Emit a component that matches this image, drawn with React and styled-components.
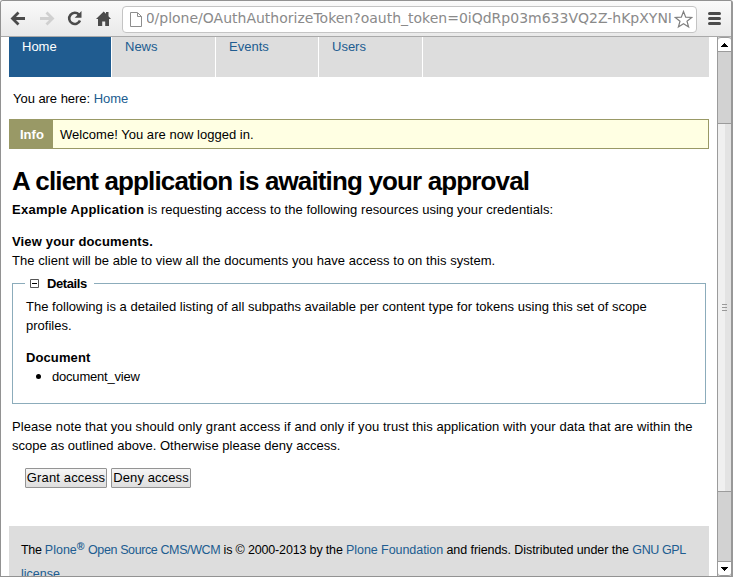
import React from "react";
import styled, { createGlobalStyle } from "styled-components";

const Global = createGlobalStyle`
  * { box-sizing: border-box; }
  html, body { margin: 0; padding: 0; overflow: hidden; }
  body { background: #fff; font-family: "Liberation Sans", Arial, sans-serif; font-size: 13px; color: #000; }
`;

const Window = styled.div`
  width: 733px;
  height: 577px;
  display: flex;
  flex-direction: column;
  border: 1px solid #929292;
  border-right: 2px solid #989898;
  border-radius: 3px 3px 0 0;
  overflow: hidden;
  background: #fff;
`;

const Toolbar = styled.header`
  flex: none;
  height: 36px;
  display: flex;
  align-items: center;
  border-bottom: 1px solid #a9a9a9;
  background: linear-gradient(#fafafa, #e9e9e9);
`;

const NavIcons = styled.svg`
  flex: none;
  width: 121px;
  height: 35px;
`;

const AddressBar = styled.div`
  width: 575px;
  height: 27px;
  margin-top: 1px;
  display: flex;
  align-items: center;
  border: 1px solid #c4c4c4;
  border-radius: 4px;
  background: #fff;
`;

const PageIcon = styled.svg`
  flex: none;
  width: 24px;
  height: 25px;
`;

const UrlClip = styled.div`
  flex: none;
  width: 526px;
  height: 23px;
  overflow: hidden;
  display: flex;
  justify-content: flex-end;
  padding-right: 1px;
`;

const Url = styled.span`
  flex: none;
  font: 14px/20px "DejaVu Sans", sans-serif;
  letter-spacing: ${(p) => p.$ls}px;
  color: #8a8a8a;
  white-space: nowrap;
`;

const Viewport = styled.div`
  flex: 1;
  min-height: 0;
  display: flex;
`;

const Page = styled.div`
  flex: 1;
  min-width: 0;
  padding: 0 8px;
  overflow: hidden;
`;

const Nav = styled.nav`
  height: 40px;
  display: flex;
  background: #ddd;
`;

const Tab = styled.a`
  width: ${(p) => p.$w}px;
  padding-left: 13px;
  border-right: 1px solid #fff;
  line-height: 20px;
  background: ${(p) => (p.$active ? "#205c90" : "#ddd")};
  color: ${(p) => (p.$active ? "#fff" : "#205c90")};
`;

const Line = styled.div`
  height: 19px;
  line-height: 19px;
  white-space: nowrap;
  letter-spacing: ${(p) => p.$ls || 0}px;
  font-weight: ${(p) => (p.$bold ? 700 : 400)};
`;

const Link = styled.a`
  color: #205c90;
`;

const Run = styled.span`
  letter-spacing: ${(p) => p.$ls}px;
  font-weight: ${(p) => (p.$bold ? 700 : 400)};
`;

const Breadcrumbs = styled.div`
  padding: 12px 0 11px 4px;
`;

const Message = styled.div`
  height: 30px;
  display: flex;
  border: 1px solid #996;
  background: #ffffe3;
  line-height: 29px;
`;

const MessageLabel = styled.strong`
  width: 43px;
  padding-left: 10px;
  margin-right: 7px;
  background: #996;
  color: #fff;
`;

const Content = styled.main`
  padding: 15px 3px 0;
`;

const Title = styled.h1`
  margin: 0;
  height: 36px;
  font-size: 26px;
  line-height: 35px;
  letter-spacing: ${(p) => p.$ls}px;
  white-space: nowrap;
`;

const Section = styled.section`
  margin-top: 13px;
`;

const Details = styled.fieldset`
  margin: 4px 0 0;
  height: 130px;
  min-width: 0;
  padding: 4px 0 0 13px;
  border: 1px solid #8cacbb;
`;

const Legend = styled.legend`
  display: flex;
  align-items: center;
  height: 19px;
  margin-left: -1px;
  padding: 0 7px 0 5px;
  font-weight: 700;
  letter-spacing: -0.4px;
`;

const Collapse = styled.svg`
  width: 9px;
  height: 9px;
  margin-right: 8px;
`;

const Bullet = styled.span`
  display: inline-block;
  width: 5px;
  height: 5px;
  margin: 0 11px 2px 10px;
  border-radius: 50%;
  background: #000;
`;

const Actions = styled.div`
  display: flex;
  gap: 4px;
  padding: 13px 0 0 13px;
`;

const Button = styled.button`
  width: ${(p) => p.$w}px;
  height: 20px;
  padding: 0;
  border: 1px solid #949494;
  border-radius: 1px;
  background: linear-gradient(#f6f6f6, #dedede);
  color: #000;
  font: 13px/18px "Liberation Sans", Arial, sans-serif;
  letter-spacing: ${(p) => p.$ls}px;
  white-space: nowrap;
`;

const Footer = styled.footer`
  height: 60px;
  margin-top: 38px;
  padding: 12px;
  background: #ddd;
  font-size: 12.5px;
  line-height: 24px;
  white-space: nowrap;
`;

const FooterLine = styled.div`
  height: 24px;
`;

const Registered = styled.sup`
  font-size: 10.5px;
  font-weight: 700;
  line-height: 0;
  vertical-align: 4px;
`;

const Scrollbar = styled.div`
  flex: none;
  width: 14px;
  display: flex;
  flex-direction: column;
  border-left: 1px solid #9b9b9b;
  background: #d2d2d2;
`;

const ScrollButton = styled.svg`
  flex: none;
  width: 13px;
  height: 15px;
  background: #fff;
  border-radius: ${(p) => (p.$down ? "0 0 3px 3px" : "3px 3px 0 0")};
  border-top: 1px solid #9b9b9b;
  border-bottom: 1px solid #9b9b9b;
`;

const Track = styled.div`
  flex: 1;
  padding-top: 71px;
`;

const Thumb = styled.div`
  height: 369px;
  border-top: 1px solid #9b9b9b;
  border-bottom: 1px solid #9b9b9b;
  background: linear-gradient(90deg, #f0f0f0 7px, #e3e3e3 7px);
  display: flex;
  flex-direction: column;
  align-items: center;
  justify-content: center;
  gap: 2px;
`;

const Grip = styled.i`
  width: 5px;
  height: 1px;
  background: #999;
`;

const tabs = [
  { name: "Home", w: 103, active: true },
  { name: "News", w: 104 },
  { name: "Events", w: 103 },
  { name: "Users", w: 104 },
];

export default function App() {
  return (
    <>
      <Global />
      <Window>
        <Toolbar>
          <NavIcons viewBox="1 1 121 35" fill="none">
            <path d="M25 18.500H13.500M18.500 12.500l-6 6 6 6" stroke="#4b4b4b" strokeWidth="2.800" />
            <path d="M40 18.500h11.500M46.500 12.500l6 6-6 6" stroke="#d0d0d0" strokeWidth="2.800" />
            <path d="M79 14.700A5.600 5.600 0 1 0 80 20.500" stroke="#4b4b4b" strokeWidth="2.600" />
            <path d="M81.500 11v6.800h-6.800z" fill="#4b4b4b" />
            <path d="M96 19l7.700-7.500 2.300 2.200V12h2.500v4.200l2.500 2.800h-2v7h-3.800v-4.500h-3V26H98v-7z" fill="#4b4b4b" />
          </NavIcons>
          <AddressBar>
            <PageIcon viewBox="0 0 24 25">
              <path d="M7.500 5.500h7l4 4v10h-11z" fill="#fff" stroke="#8d8d8d" />
              <path d="M14.500 6v3.500h4" fill="none" stroke="#8d8d8d" />
            </PageIcon>
            <UrlClip>
              <Url $ls={0}>0/plone/OAuthAuthorizeToken?oauth_token=0iQdRp03m633VQ2Z-hKpXYNI</Url>
            </UrlClip>
            <svg width="23" height="25" viewBox="673 6 23 25">
              <path d="M683.500 10.500l2.200 5.600 6 .3-4.700 3.800 1.600 5.800-5.100-3.300-5.100 3.300 1.600-5.800-4.700-3.800 6-.3z" fill="#fff" stroke="#808080" strokeWidth="1.200" />
            </svg>
          </AddressBar>
          <svg width="34" height="35" viewBox="697 1 34 35">
            <path d="M709.500 13.500h10M709.500 18.500h10M709.500 23.500h10" stroke="#4b4b4b" strokeWidth="3" strokeLinecap="round" />
          </svg>
        </Toolbar>
        <Viewport>
          <Page>
            <Nav>
              {tabs.map((t) => (
                <Tab key={t.name} $w={t.w} $active={t.active}>{t.name}</Tab>
              ))}
            </Nav>
            <Breadcrumbs>
              <Line $ls={-0.04}>You are here: <Link>Home</Link></Line>
            </Breadcrumbs>
            <Message>
              <MessageLabel>Info</MessageLabel>
              <Run $ls={0.03}>Welcome! You are now logged in.</Run>
            </Message>
            <Content>
              <Title $ls={-0.86}>A client application is awaiting your approval</Title>
              <Line>
                <Run $bold $ls={0.25}>Example Application</Run>
                <Run $ls={0.04}> is requesting access to the following resources using your credentials:</Run>
              </Line>
              <Section>
                <Line $bold $ls={0.16}>View your documents.</Line>
                <Line $ls={0.05}>The client will be able to view all the documents you have access to on this system.</Line>
              </Section>
              <Details>
                <Legend>
                  <Collapse viewBox="0 0 9 9">
                    <path d="M.5.500h8v8h-8z" fill="#fff" stroke="#555" />
                    <path d="M2 4.500h5" stroke="#000" />
                  </Collapse>
                  Details
                </Legend>
                <Line $ls={0.02}>The following is a detailed listing of all subpaths available per content type for tokens using this set of scope</Line>
                <Line>profiles.</Line>
                <Section>
                  <Line $bold $ls={0.1}>Document</Line>
                  <Line $ls={-0.2}><Bullet />document_view</Line>
                </Section>
              </Details>
              <Section>
                <Line $ls={0.07}>Please note that you should only grant access if and only if you trust this application with your data that are within the</Line>
                <Line $ls={0.02}>scope as outlined above. Otherwise please deny access.</Line>
              </Section>
              <Actions>
                <Button $w={82} $ls={0.15}>Grant access</Button>
                <Button $w={80} $ls={0.1}>Deny access</Button>
              </Actions>
            </Content>
            <Footer>
              <FooterLine>
                <Run $ls={-0.3}>The </Run>
                <Link>Plone<Registered>®</Registered> <Run $ls={-0.39}>Open Source CMS/WCM</Run></Link>
                <Run $ls={-0.16}> is © 2000-2013 by the </Run>
                <Link><Run $ls={-0.06}>Plone Foundation</Run></Link>
                <Run $ls={-0.07}> and friends. Distributed under the </Run>
                <Link><Run $ls={-0.4}>GNU GPL</Run></Link>
              </FooterLine>
              <FooterLine><Link>license</Link>.</FooterLine>
            </Footer>
          </Page>
          <Scrollbar>
            <ScrollButton viewBox="0 0 13 13">
              <path d="M3 9h7v-1h-1v-1h-1v-1h-1v-1h-1v1h-1v1h-1v1h-1z" fill="#000" />
            </ScrollButton>
            <Track>
              <Thumb><Grip /><Grip /><Grip /></Thumb>
            </Track>
            <ScrollButton $down viewBox="0 0 13 13">
              <path d="M3 5h7v1h-1v1h-1v1h-1v1h-1v-1h-1v-1h-1v-1h-1z" fill="#000" />
            </ScrollButton>
          </Scrollbar>
        </Viewport>
      </Window>
    </>
  );
}
